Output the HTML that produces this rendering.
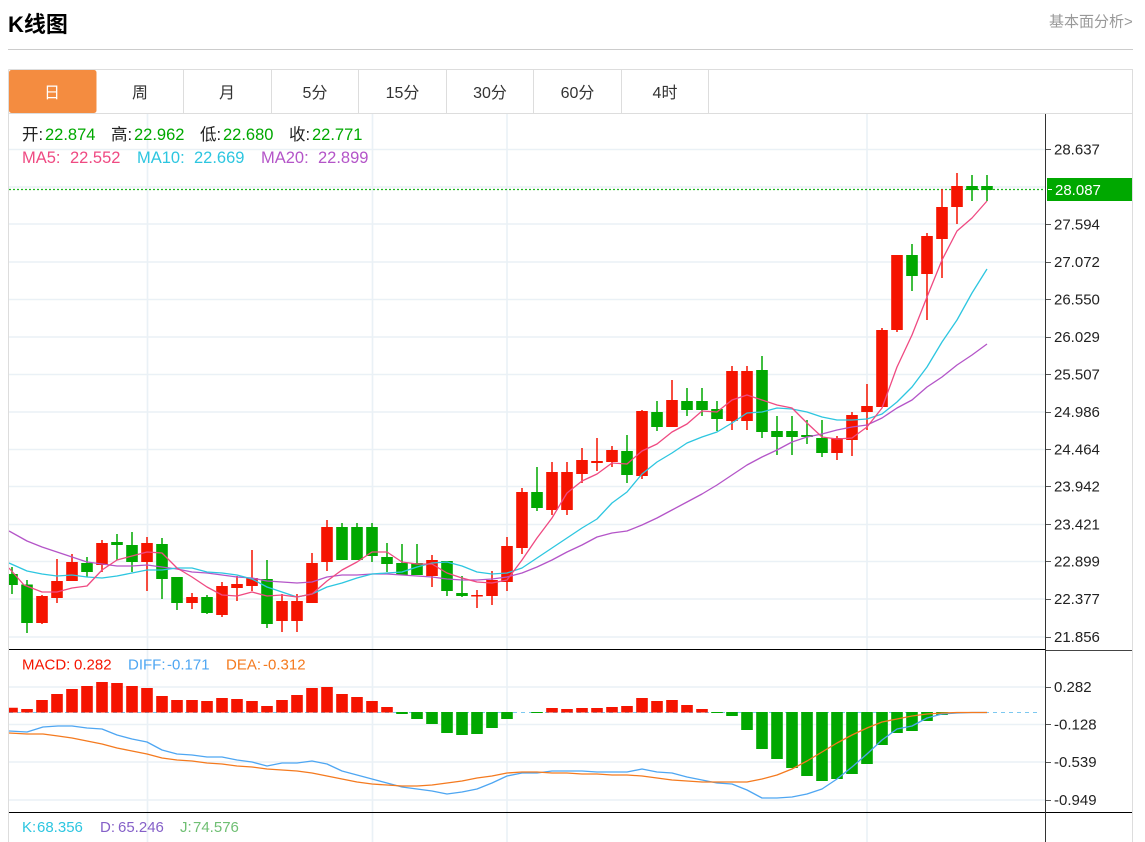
<!DOCTYPE html>
<html lang="zh">
<head>
<meta charset="utf-8">
<title>K线图</title>
<style>
html,body{margin:0;padding:0;background:#fff;width:1145px;height:842px;overflow:hidden}
svg{display:block}
text{font-family:"Liberation Sans","Noto Sans CJK SC",sans-serif}
</style>
</head>
<body>
<svg width="1145" height="842" viewBox="0 0 1145 842" xmlns="http://www.w3.org/2000/svg">
<defs><clipPath id="c"><rect x="9" y="114" width="1036" height="728"/></clipPath></defs>
<rect width="1145" height="842" fill="#fff"/>
<text x="8" y="32" font-size="22" font-weight="700" fill="#000">K线图</text>
<text x="1049" y="26.500" font-size="15" fill="#999">基本面分析&gt;</text>
<path d="M8 49.500H1133" stroke="#ccc" stroke-width="1" fill="none"/>

<!-- grid -->
<g stroke="#eaf1f6" stroke-width="1.600" fill="none">
<path d="M9 149.500H1045M9 187H1045M9 224H1045M9 262H1045M9 299.500H1045M9 337H1045M9 374.500H1045M9 412H1045M9 449.500H1045M9 486.500H1045M9 524.500H1045M9 561.500H1045M9 599H1045M9 637H1045M9 687H1045M9 724.500H1045M9 762H1045M9 800H1045"/>
<path d="M147.500 114V842M372.500 114V842M507 114V842M867 114V842"/>
</g>

<!-- frame -->
<g fill="none" stroke="#ddd" stroke-width="1">
<path d="M8.500 69.500H1132.500V842M8.500 69.500V842M9 113.500H1132"/>
<path d="M183.500 70V113M271.500 70V113M358.500 70V113M446.500 70V113M533.500 70V113M621.500 70V113M708.500 70V113"/>
</g>
<rect x="9" y="70" width="87.500" height="43" rx="2.500" fill="#f48c40"/>
<g font-size="16" fill="#333" text-anchor="middle">
<text x="52" y="98" fill="#fff">日</text>
<text x="140" y="98">周</text>
<text x="227" y="98">月</text>
<text x="315" y="98">5分</text>
<text x="402.500" y="98">15分</text>
<text x="490" y="98">30分</text>
<text x="577.500" y="98">60分</text>
<text x="665" y="98">4时</text>
</g>

<!-- price line -->
<path d="M9 189.500H1043" stroke="#1fb31f" stroke-width="1.200" stroke-dasharray="2 2" fill="none"/>

<g clip-path="url(#c)">
<!-- candles -->
<path fill="none" stroke="#00a800" stroke-width="1.500" d="M12 567V594M27 580V633M87 557V577M117 534V560M132 532V572M162 538V599M177 577V610M207 595V614M267 560V628M342 523V560M357 523V560M372 523V562M387 543V572M402 544V575M417 544V575M447 561V596M462 576V597M537 467V511M627 435V483M657 401V431M687 388V416M702 388V416M717 401V431M762 356V438M777 416V455M792 416V455M807 420V444M822 420V457M912 244V291M972 175V201M987 175V201"/>
<path fill="none" stroke="#00a800" stroke-width="11.600" d="M12 574V585M27 584.500V623M87 563V572M117 542V545M132 545V562M162 544V579M177 577V603M207 597V613M267 579V624M342 527V560M357 527V560M372 527V556M387 557V564M402 563V575M417 563V575M447 561V591M462 593V596M537 492V508M627 451V475M657 412V427M687 401V410M702 401V410M717 409V419M762 370V432M777 431V437M792 431V437M807 435V437M822 438V453M912 255V276M972 186V190M987 186V190"/>
<path fill="none" stroke="#f51400" stroke-width="1.500" d="M42 595V624M57 559V603M72 554V581M102 540V572M147 537V591M192 593V609M222 582V617M237 576V601M252 550V591M282 594V632M297 594V632M312 553V603M327 520V571M432 555V587M477 590V608M492 571V605M507 537V591M522 488V554M552 462V515M567 462V515M582 448V483M597 438V471M612 446V467M642 410V479M672 380V427M732 366V430M747 366V430M837 436V460M852 412V456M867 384V430M882 328V407M897 255V332M927 233V320M942 189V278M957 173V224"/>
<path fill="none" stroke="#f51400" stroke-width="11.600" d="M42 596V623M57 581V598M72 562V581M102 543V565M147 543V562M192 597V603M222 586V615M237 584V588M252 578V586M282 601V621M297 601V621M312 563V603M327 527V562M432 560V576M477 595V596.500M492 580V596M507 546V582M522 492V548M552 472V510M567 472V510M582 460V474M597 461V463M612 450V462M642 411V476M672 400V427M732 371V421M747 371V421M837 438V453M852 415V440M867 406V412M882 330V407M897 255V330M927 236V274M942 207V239M957 186V207"/>

<!-- MAs -->
<g fill="none" stroke-width="1.300" stroke-linejoin="round">
<polyline stroke="#b455c8" points="9,531 27,541 42,547 57,552 72,557 87,562 102,564 117,566 132,566 147,565 162,567 177,569 192,572 207,573 222,575 237,577 252,578 267,581 282,582 297,583 312,582 327,577 342,575 357,575 372,574 387,574 402,575 417,576 432,577 447,579 462,580 477,580 492,579 507,577 522,573 537,567 552,560 567,552 582,545 597,537 612,533 627,531 642,525 657,518 672,510 687,502 702,494 717,485 732,475 747,465 762,457 777,450 792,442 807,437 822,434 837,430 852,427 867,425 882,418 897,408 912,400 927,387 942,377 957,365 972,355 987,344"/>
<polyline stroke="#2dc6e0" points="9,563 27,571 42,574 57,576 72,575 87,577 102,578 117,576 132,573 147,570 162,570 177,568 192,568 207,572 222,573 237,575 252,579 267,587 282,592 297,597 312,594 327,587 342,583 357,578 372,574 387,573 402,572 417,567 432,563 447,562 462,566 477,572 492,574 507,573 522,568 537,558 552,548 567,538 582,528 597,519 612,503 627,492 642,474 657,462 672,453 687,443 702,437 717,432 732,423 747,413 762,412 777,408 792,409 807,412 822,417 837,420 852,420 867,419 882,414 897,402 912,387 927,367 942,342 957,320 972,293 987,269"/>
<polyline stroke="#ef4a82" points="9,568 24,585 42,592 57,592 72,588 87,586 102,570 117,560 132,556 147,552 162,553 177,568 192,577 207,587 222,595 237,596 252,592 267,596 282,595 297,597 312,594 327,581 342,570 357,562 372,552 387,552 402,562 417,564 432,564 447,573 462,578 477,582 492,583 507,580 522,560 537,538 552,518 567,493 582,481 597,474 612,463 627,464 642,451 657,444 672,432 687,424 702,411 717,412 732,400 747,395 762,400 777,405 792,408 807,423 822,437 837,439 852,438 867,427 882,408 897,367 912,335 927,297 942,260 957,231 972,218 987,201"/>
</g>

<!-- MACD bars -->
<path d="M9 712.500H1040" stroke="#7cc8f0" stroke-width="1" stroke-dasharray="4 4" fill="none"/>
<path fill="none" stroke="#f51400" stroke-width="11.600" d="M12 707.700V712.500M27 709V712.500M42 700V712.500M57 694V712.500M72 689V712.500M87 686V712.500M102 682V712.500M117 683V712.500M132 686V712.500M147 688V712.500M162 696V712.500M177 700V712.500M192 700V712.500M207 701V712.500M222 698V712.500M237 699V712.500M252 701V712.500M267 706V712.500M282 700V712.500M297 695V712.500M312 688V712.500M327 687V712.500M342 694V712.500M357 697V712.500M372 701V712.500M387 707V712.500M552 708V712.500M567 709V712.500M582 708V712.500M597 708V712.500M612 707V712.500M627 706V712.500M642 698V712.500M657 701V712.500M672 700V712.500M687 705V712.500M702 709V712.500"/>
<path fill="none" stroke="#00a800" stroke-width="11.600" d="M402 712V714M417 712V719M432 712V724M447 712V733M462 712V735M477 712V734M492 712V728M507 712V719M537 712V713M717 712V713M732 712V716M747 712V730M762 712V749M777 712V759M792 712V768M807 712V776M822 712V781M837 712V779M852 712V774M867 712V764M882 712V745M897 712V733M912 712V731M927 712V721M942 712V715"/>
<g fill="none" stroke-width="1.300" stroke-linejoin="round">
<polyline stroke="#4ea6f2" points="9,731 27,732 43,727 58,726 72,726 87,728 102,729 117,735 132,739 147,742 162,750 177,754 192,755 207,757 222,757 237,760 252,762 267,766 282,763 297,763 312,761 327,764 342,771 357,775 372,779 387,783 402,787 417,789 432,791 447,794 462,792 477,789 492,783 507,776 522,773 537,773 552,771 567,771 582,771 597,772 612,772 627,772 642,769 657,772 672,773 687,777 702,780 717,783 732,784 747,790 762,798 777,798 792,797 807,794 822,789 837,779 852,767 867,754 882,740 897,729 912,726 927,718 942,714 957,713 972,712.500 987,712.500"/>
<polyline stroke="#f47a1f" points="9,733 27,734 43,734 58,736 72,738 87,741 102,744 117,748 132,751 147,754 162,758 177,760 192,761 207,763 222,764 237,766 252,767 267,769 282,770 297,771 312,773 327,776 342,779 357,782 372,784 387,785 402,786 417,786 432,785 447,783 462,781 477,778 492,776 507,773 522,772 537,772 552,773 567,773 582,774 597,774 612,775 627,775 642,776 657,778 672,780 687,781 702,782 717,782 732,782 747,782 762,779 777,775 792,769 807,761 822,752 837,743 852,735 867,728 882,722 897,719 912,716 927,714 942,713 957,712.500 987,712.500"/>
</g>
</g>

<!-- axis -->
<path d="M9 649.500H1045M9 812.500H1132" stroke="#000" stroke-width="1" fill="none"/>
<path d="M1045 650.500H1132" stroke="#444" stroke-width="1" fill="none"/>
<path d="M1045.500 114V842" stroke="#333" stroke-width="1" fill="none"/>
<path d="M1046 149.500H1051M1046 224.500H1051M1046 262.500H1051M1046 299.500H1051M1046 337.500H1051M1046 374.500H1051M1046 412.500H1051M1046 449.500H1051M1046 486.500H1051M1046 524.500H1051M1046 561.500H1051M1046 599.500H1051M1046 637.500H1051M1046 687.500H1051M1046 724.500H1051M1046 762.500H1051M1046 800.500H1051" stroke="#555" stroke-width="1" fill="none"/>
<rect x="1047" y="178" width="85" height="23" fill="#00a800"/>
<path d="M1048 189.500H1052" stroke="#fff" stroke-width="1"/>
<g font-size="15" fill="#222">
<text x="1054" y="154.500">28.637</text>
<text x="1055" y="195" fill="#fff">28.087</text>
<text x="1054" y="229.500">27.594</text>
<text x="1054" y="267">27.072</text>
<text x="1054" y="304.500">26.550</text>
<text x="1054" y="342">26.029</text>
<text x="1054" y="379.500">25.507</text>
<text x="1054" y="417">24.986</text>
<text x="1054" y="454.500">24.464</text>
<text x="1054" y="491.500">23.942</text>
<text x="1054" y="529.500">23.421</text>
<text x="1054" y="566.500">22.899</text>
<text x="1054" y="604">22.377</text>
<text x="1054" y="642">21.856</text>
<text x="1054" y="692">0.282</text>
<text x="1054" y="729.500">-0.128</text>
<text x="1054" y="767">-0.539</text>
<text x="1054" y="805">-0.949</text>
</g>

<!-- info rows -->
<g font-size="16.500">
<g fill="#222">
<text x="22" y="140">开:</text><text x="111" y="140">高:</text><text x="200" y="140">低:</text><text x="289" y="140">收:</text>
</g>
<g fill="#00a800">
<text x="45" y="140">22.874</text><text x="134" y="140">22.962</text><text x="223" y="140">22.680</text><text x="312" y="140">22.771</text>
</g>
<text x="22" y="163" fill="#ef4a82">MA5:</text><text x="70" y="163" fill="#ef4a82">22.552</text>
<text x="137" y="163" fill="#2dc6e0">MA10:</text><text x="194" y="163" fill="#2dc6e0">22.669</text>
<text x="261" y="163" fill="#b455c8">MA20:</text><text x="318" y="163" fill="#b455c8">22.899</text>
</g>
<g font-size="15">
<text x="22" y="669.500" fill="#f51400">MACD:</text><text x="74" y="669.500" fill="#f51400">0.282</text>
<text x="128" y="669.500" fill="#4ea6f2">DIFF:</text><text x="167" y="669.500" fill="#4ea6f2">-0.171</text>
<text x="226" y="669.500" fill="#f47a1f">DEA:</text><text x="263" y="669.500" fill="#f47a1f">-0.312</text>
<text x="22" y="832" fill="#2dc6e0">K:</text><text x="37" y="832" fill="#2dc6e0">68.356</text>
<text x="100" y="832" fill="#8560c8">D:</text><text x="118" y="832" fill="#8560c8">65.246</text>
<text x="180" y="832" fill="#6fbf73">J:</text><text x="193" y="832" fill="#6fbf73">74.576</text>
</g>
</svg>
</body>
</html>
